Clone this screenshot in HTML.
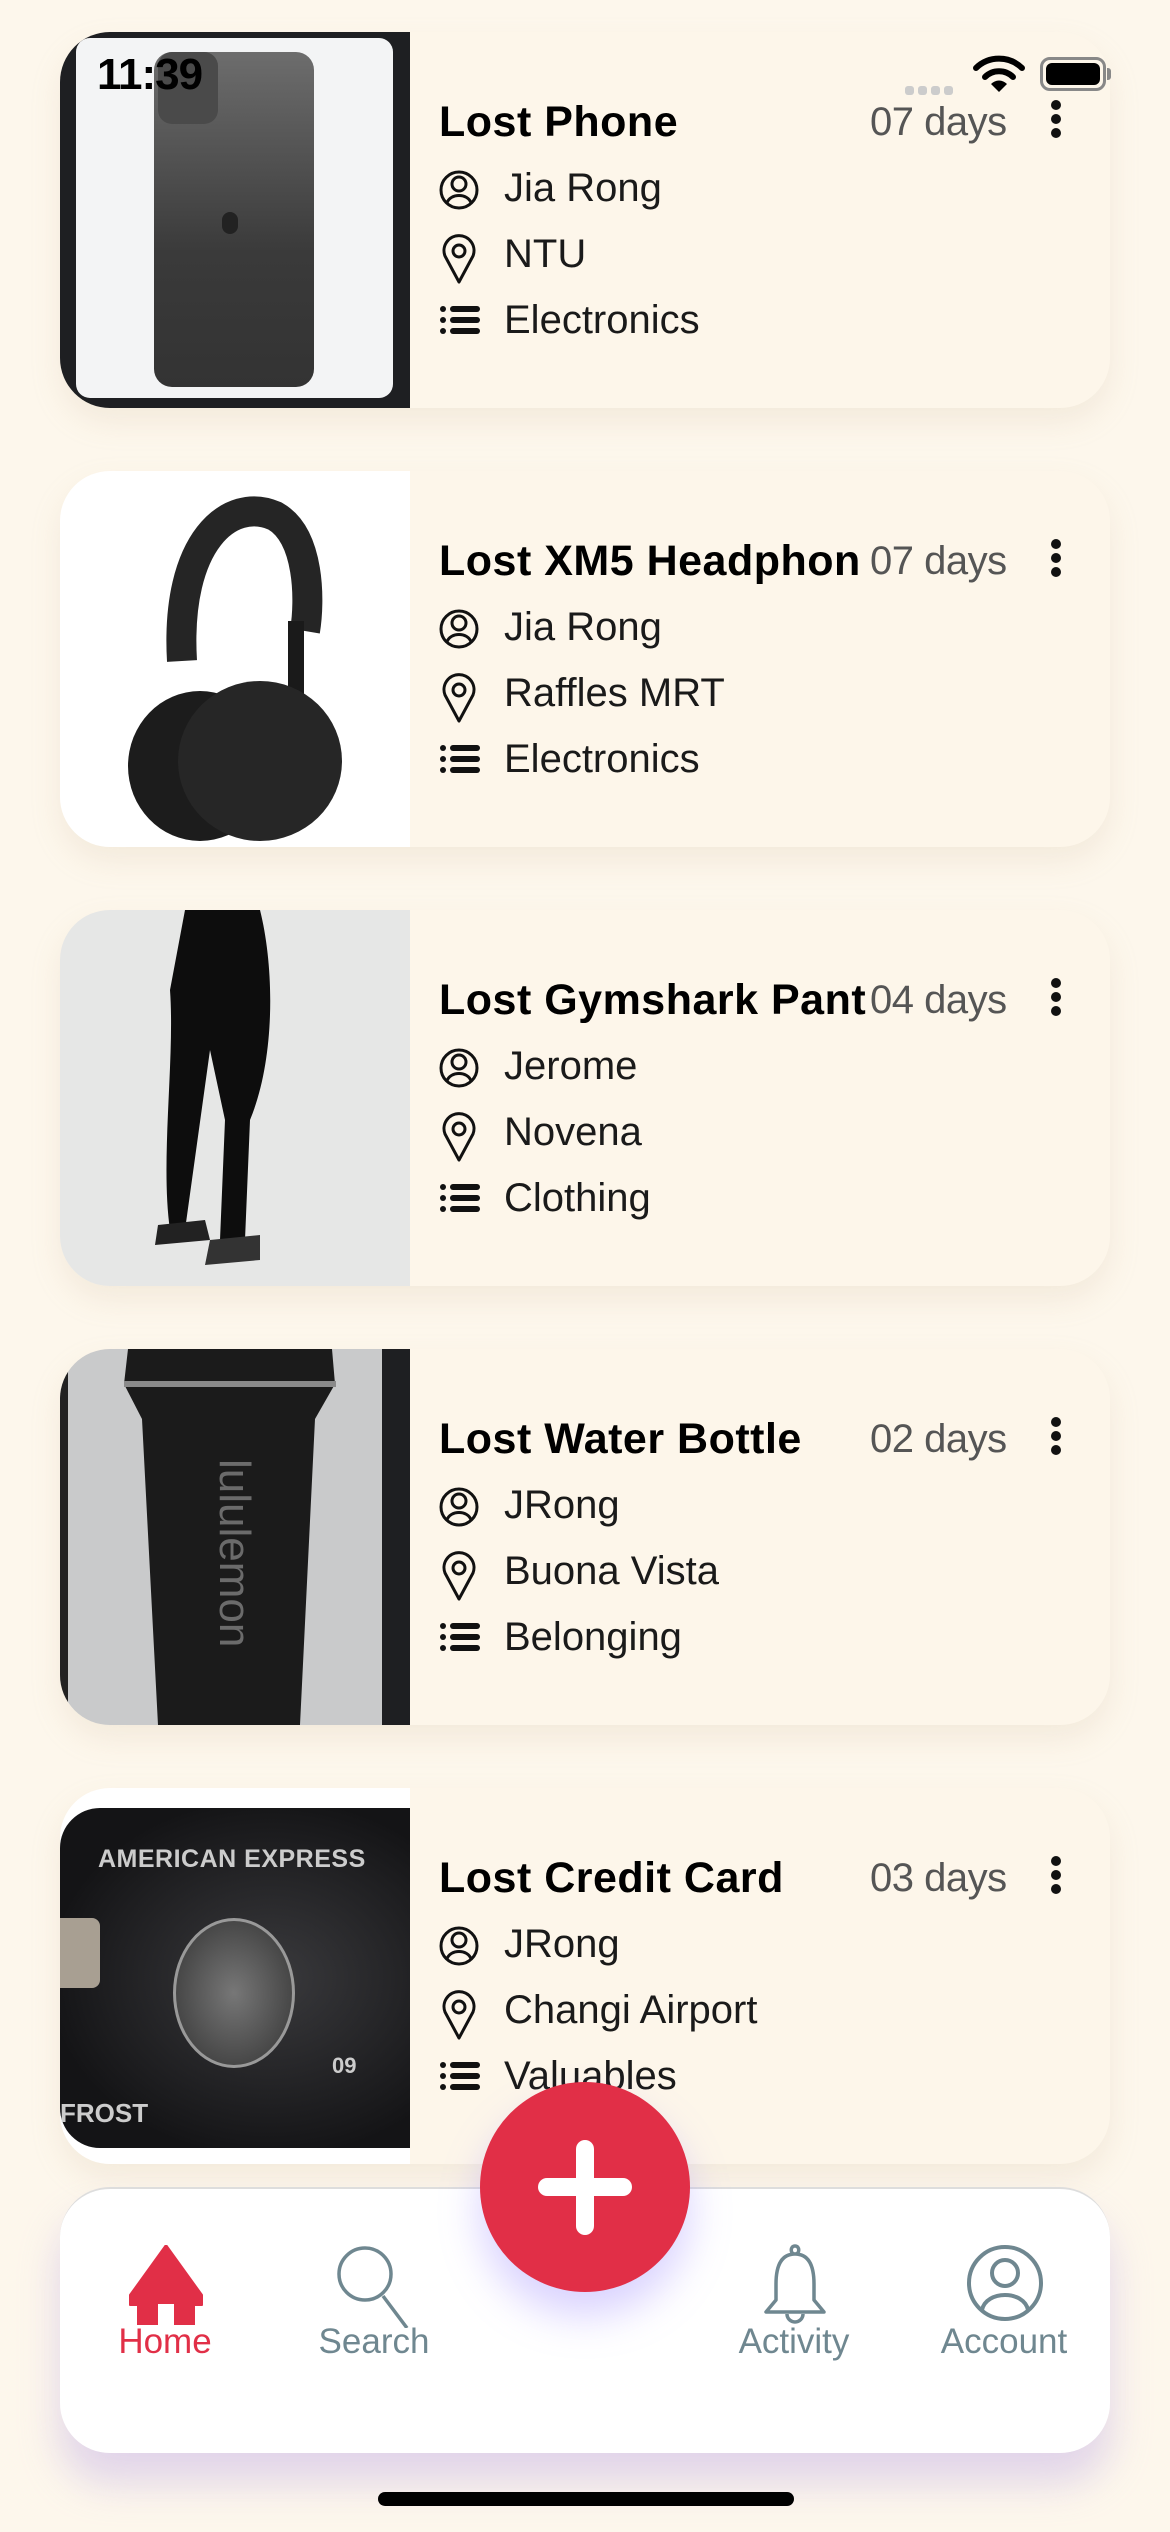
<!DOCTYPE html>
<html><head><meta charset="utf-8"><style>
*{margin:0;padding:0;box-sizing:border-box}
body{width:1170px;height:2532px;background:#fdf7ec;position:relative;overflow:hidden;font-family:"Liberation Sans",sans-serif}
.card{position:absolute;left:60px;width:1050px;height:376px;background:#fdf6ea;border-radius:50px;box-shadow:0 14px 30px rgba(200,180,150,0.18);overflow:hidden}
.img{position:absolute;left:0;top:0;width:350px;height:376px;overflow:hidden}
.title{position:absolute;left:379px;top:66px;font-size:43px;font-weight:bold;color:#000;white-space:nowrap;letter-spacing:0.5px}
.days{position:absolute;left:808px;top:68px;font-size:40px;color:#555;background:#fdf6ea;padding-left:2px;letter-spacing:-0.5px}
.dots{position:absolute;left:991px;top:68px;width:12px}
.dots i{display:block;width:10px;height:10px;border-radius:50%;background:#111;margin-bottom:4px}
.row{position:absolute;left:379px;font-size:40px;color:#1a1a1a;white-space:nowrap}
.row svg{position:absolute;left:0;top:2px}
.row span{position:absolute;left:65px;top:0}
.nav{position:absolute;left:60px;top:2187px;width:1050px;height:266px;background:#fff;border-radius:50px;box-shadow:0 30px 40px rgba(190,170,230,0.45);border-top:2px solid #ddd}
.lbl{position:absolute;top:2322px;font-size:35px;color:#6f8790;text-align:center;width:200px}
</style></head><body>

<div style="position:absolute;left:97px;top:50px;font-size:44px;font-weight:bold;color:#000;z-index:5;letter-spacing:-1px">11:39</div>
<div style="position:absolute;left:905px;top:82px;z-index:5">
<span style="display:inline-block;width:9px;height:9px;border-radius:3px;background:#ccc;margin-right:4px"></span><span style="display:inline-block;width:9px;height:9px;border-radius:3px;background:#ccc;margin-right:4px"></span><span style="display:inline-block;width:9px;height:9px;border-radius:3px;background:#ccc;margin-right:4px"></span><span style="display:inline-block;width:9px;height:9px;border-radius:3px;background:#ccc"></span></div>
<svg style="position:absolute;left:973px;top:54px;z-index:5" width="52" height="38" viewBox="0 0 52 38"><path d="M3 14 A33 33 0 0 1 49 14" stroke="#000" stroke-width="6" fill="none" stroke-linecap="round"/><path d="M12 23 A20 20 0 0 1 40 23" stroke="#000" stroke-width="6" fill="none" stroke-linecap="round"/><path d="M18 30 L26 38 L34 30 A11 11 0 0 0 18 30Z" fill="#000"/></svg>
<div style="position:absolute;left:1040px;top:57px;width:66px;height:34px;border:3px solid #888;border-radius:10px;z-index:5;padding:3px"><div style="width:100%;height:100%;background:#000;border-radius:6px"></div></div>
<div style="position:absolute;left:1107px;top:68px;width:4px;height:12px;background:#888;border-radius:0 3px 3px 0;z-index:5"></div>

<div class="card" style="top:32px">
 <div class="img" style="background:#1e1f22"><div style="position:absolute;left:16px;top:6px;width:317px;height:360px;background:#f3f4f5;border-radius:14px"></div>
 <div style="position:absolute;left:94px;top:20px;width:160px;height:335px;border-radius:18px;background:linear-gradient(180deg,#6d6d6d,#3a3a3a 60%,#333)"></div>
 <div style="position:absolute;left:98px;top:20px;width:60px;height:72px;border-radius:14px;background:#4a4a4a"></div>
 <div style="position:absolute;left:162px;top:180px;width:16px;height:22px;border-radius:8px;background:#222"></div></div>
 <div class="title">Lost Phone</div>
 <div class="days">07 days</div>
 <div class="dots"><i></i><i></i><i></i></div>
 <div class="row" style="top:134px"><svg width="44" height="44" viewBox="0 0 44 44"><circle cx="20" cy="22" r="18" fill="none" stroke="#111" stroke-width="3"/><circle cx="20" cy="16" r="7" fill="none" stroke="#111" stroke-width="3"/><path d="M8 35 C11 25 29 25 32 35" fill="none" stroke="#111" stroke-width="3"/></svg><span>Jia Rong</span></div>
 <div class="row" style="top:200px"><svg width="44" height="50" viewBox="0 0 44 50"><path d="M20 48 L6 22 A15 15 0 1 1 34 22 Z" fill="none" stroke="#111" stroke-width="3" stroke-linejoin="round"/><circle cx="20" cy="17" r="6" fill="none" stroke="#111" stroke-width="3"/></svg><span>NTU</span></div>
 <div class="row" style="top:266px"><svg width="44" height="44" viewBox="0 0 44 44"><g fill="#111"><circle cx="4" cy="9" r="3"/><circle cx="4" cy="20" r="3"/><circle cx="4" cy="31" r="3"/><rect x="11" y="6" width="30" height="6" rx="3"/><rect x="11" y="17" width="30" height="6" rx="3"/><rect x="11" y="28" width="30" height="6" rx="3"/></g></svg><span>Electronics</span></div>
</div>

<div class="card" style="top:471px">
 <div class="img" style="background:#fff"><svg width="350" height="376" viewBox="0 0 350 376"><path d="M122 190 C115 70 170 25 215 45 C250 65 250 130 245 160" stroke="#252525" stroke-width="30" fill="none"/><rect x="228" y="150" width="16" height="90" fill="#1a1a1a"/><ellipse cx="140" cy="295" rx="72" ry="75" fill="#1c1c1c"/><ellipse cx="200" cy="290" rx="82" ry="80" fill="#262626"/></svg></div>
 <div class="title">Lost XM5 Headphon</div>
 <div class="days">07 days</div>
 <div class="dots"><i></i><i></i><i></i></div>
 <div class="row" style="top:134px"><svg width="44" height="44" viewBox="0 0 44 44"><circle cx="20" cy="22" r="18" fill="none" stroke="#111" stroke-width="3"/><circle cx="20" cy="16" r="7" fill="none" stroke="#111" stroke-width="3"/><path d="M8 35 C11 25 29 25 32 35" fill="none" stroke="#111" stroke-width="3"/></svg><span>Jia Rong</span></div>
 <div class="row" style="top:200px"><svg width="44" height="50" viewBox="0 0 44 50"><path d="M20 48 L6 22 A15 15 0 1 1 34 22 Z" fill="none" stroke="#111" stroke-width="3" stroke-linejoin="round"/><circle cx="20" cy="17" r="6" fill="none" stroke="#111" stroke-width="3"/></svg><span>Raffles MRT</span></div>
 <div class="row" style="top:266px"><svg width="44" height="44" viewBox="0 0 44 44"><g fill="#111"><circle cx="4" cy="9" r="3"/><circle cx="4" cy="20" r="3"/><circle cx="4" cy="31" r="3"/><rect x="11" y="6" width="30" height="6" rx="3"/><rect x="11" y="17" width="30" height="6" rx="3"/><rect x="11" y="28" width="30" height="6" rx="3"/></g></svg><span>Electronics</span></div>
</div>

<div class="card" style="top:910px">
 <div class="img" style="background:#e6e7e6"><svg width="350" height="376" viewBox="0 0 350 376"><path d="M125 0 L200 0 C215 60 215 150 190 210 L185 330 L160 330 L165 210 L150 140 L125 320 L110 320 C100 250 115 150 110 80 Z" fill="#0d0d0d"/><path d="M98 315 L145 310 L150 330 L95 335 Z" fill="#222"/><path d="M150 330 L200 325 L200 350 L145 355 Z" fill="#333"/></svg></div>
 <div class="title">Lost Gymshark Pant</div>
 <div class="days">04 days</div>
 <div class="dots"><i></i><i></i><i></i></div>
 <div class="row" style="top:134px"><svg width="44" height="44" viewBox="0 0 44 44"><circle cx="20" cy="22" r="18" fill="none" stroke="#111" stroke-width="3"/><circle cx="20" cy="16" r="7" fill="none" stroke="#111" stroke-width="3"/><path d="M8 35 C11 25 29 25 32 35" fill="none" stroke="#111" stroke-width="3"/></svg><span>Jerome</span></div>
 <div class="row" style="top:200px"><svg width="44" height="50" viewBox="0 0 44 50"><path d="M20 48 L6 22 A15 15 0 1 1 34 22 Z" fill="none" stroke="#111" stroke-width="3" stroke-linejoin="round"/><circle cx="20" cy="17" r="6" fill="none" stroke="#111" stroke-width="3"/></svg><span>Novena</span></div>
 <div class="row" style="top:266px"><svg width="44" height="44" viewBox="0 0 44 44"><g fill="#111"><circle cx="4" cy="9" r="3"/><circle cx="4" cy="20" r="3"/><circle cx="4" cy="31" r="3"/><rect x="11" y="6" width="30" height="6" rx="3"/><rect x="11" y="17" width="30" height="6" rx="3"/><rect x="11" y="28" width="30" height="6" rx="3"/></g></svg><span>Clothing</span></div>
</div>

<div class="card" style="top:1349px">
 <div class="img" style="background:#c9cacb"><div style="position:absolute;left:0;top:0;width:8px;height:376px;background:#222"></div><div style="position:absolute;left:322px;top:0;width:28px;height:376px;background:#1e1f22"></div>
 <svg width="350" height="376" viewBox="0 0 350 376" style="position:absolute;left:0;top:0"><path d="M68 0 L272 0 L275 35 L255 70 L240 376 L98 376 L82 70 L64 35 Z" fill="#1b1b1b"/><rect x="64" y="32" width="212" height="6" fill="#8a8a8a"/>
 <text transform="translate(160,110) rotate(90)" font-family="Liberation Sans" font-size="44" fill="#6b6b6b">lululemon</text></svg></div>
 <div class="title">Lost Water Bottle</div>
 <div class="days">02 days</div>
 <div class="dots"><i></i><i></i><i></i></div>
 <div class="row" style="top:134px"><svg width="44" height="44" viewBox="0 0 44 44"><circle cx="20" cy="22" r="18" fill="none" stroke="#111" stroke-width="3"/><circle cx="20" cy="16" r="7" fill="none" stroke="#111" stroke-width="3"/><path d="M8 35 C11 25 29 25 32 35" fill="none" stroke="#111" stroke-width="3"/></svg><span>JRong</span></div>
 <div class="row" style="top:200px"><svg width="44" height="50" viewBox="0 0 44 50"><path d="M20 48 L6 22 A15 15 0 1 1 34 22 Z" fill="none" stroke="#111" stroke-width="3" stroke-linejoin="round"/><circle cx="20" cy="17" r="6" fill="none" stroke="#111" stroke-width="3"/></svg><span>Buona Vista</span></div>
 <div class="row" style="top:266px"><svg width="44" height="44" viewBox="0 0 44 44"><g fill="#111"><circle cx="4" cy="9" r="3"/><circle cx="4" cy="20" r="3"/><circle cx="4" cy="31" r="3"/><rect x="11" y="6" width="30" height="6" rx="3"/><rect x="11" y="17" width="30" height="6" rx="3"/><rect x="11" y="28" width="30" height="6" rx="3"/></g></svg><span>Belonging</span></div>
</div>

<div class="card" style="top:1788px">
 <div class="img" style="background:#fff"><div style="position:absolute;left:0;top:20px;width:350px;height:340px;background:radial-gradient(ellipse at 60% 50%,#3a3a3d,#141416 75%);border-radius:40px 0 0 40px"></div>
 <div style="position:absolute;left:38px;top:57px;font-size:25px;font-weight:bold;color:#ccc;letter-spacing:0.5px">AMERICAN EXPRESS</div>
 <div style="position:absolute;left:0;top:130px;width:40px;height:70px;background:#a89f92;border-radius:0 8px 8px 0"></div>
 <div style="position:absolute;left:113px;top:130px;width:122px;height:150px;border:3px solid #999;border-radius:50%;background:radial-gradient(#777,#333)"></div>
 <div style="position:absolute;left:272px;top:265px;font-size:22px;color:#ccc;font-weight:bold">09</div>
 <div style="position:absolute;left:0;top:310px;font-size:26px;color:#ccc;font-weight:bold">FROST</div></div>
 <div class="title">Lost Credit Card</div>
 <div class="days">03 days</div>
 <div class="dots"><i></i><i></i><i></i></div>
 <div class="row" style="top:134px"><svg width="44" height="44" viewBox="0 0 44 44"><circle cx="20" cy="22" r="18" fill="none" stroke="#111" stroke-width="3"/><circle cx="20" cy="16" r="7" fill="none" stroke="#111" stroke-width="3"/><path d="M8 35 C11 25 29 25 32 35" fill="none" stroke="#111" stroke-width="3"/></svg><span>JRong</span></div>
 <div class="row" style="top:200px"><svg width="44" height="50" viewBox="0 0 44 50"><path d="M20 48 L6 22 A15 15 0 1 1 34 22 Z" fill="none" stroke="#111" stroke-width="3" stroke-linejoin="round"/><circle cx="20" cy="17" r="6" fill="none" stroke="#111" stroke-width="3"/></svg><span>Changi Airport</span></div>
 <div class="row" style="top:266px"><svg width="44" height="44" viewBox="0 0 44 44"><g fill="#111"><circle cx="4" cy="9" r="3"/><circle cx="4" cy="20" r="3"/><circle cx="4" cy="31" r="3"/><rect x="11" y="6" width="30" height="6" rx="3"/><rect x="11" y="17" width="30" height="6" rx="3"/><rect x="11" y="28" width="30" height="6" rx="3"/></g></svg><span>Valuables</span></div>
</div>

<div class="nav"></div>
<svg style="position:absolute;left:128px;top:2245px" width="76" height="80" viewBox="0 0 76 80"><path d="M38 0 L74 50 L74 60 L66 60 L66 80 L47 80 L47 58 L29 58 L29 80 L10 80 L10 60 L2 60 L2 50 Z" fill="#e12f47" stroke="#e12f47" stroke-width="2" stroke-linejoin="round"/></svg>
<div class="lbl" style="left:65px;color:#e12f47">Home</div>
<svg style="position:absolute;left:335px;top:2244px" width="80" height="84" viewBox="0 0 80 84"><circle cx="30" cy="30" r="26" fill="none" stroke="#6f8790" stroke-width="3.5"/><path d="M48 52 L72 84" stroke="#6f8790" stroke-width="3.5"/></svg>
<div class="lbl" style="left:274px">Search</div>
<svg style="position:absolute;left:762px;top:2244px" width="66" height="84" viewBox="0 0 66 84"><path d="M33 2 C28 2 28 10 33 10 C38 10 38 2 33 2Z M33 10 C18 10 14 24 14 40 L14 56 L4 68 L62 68 L52 56 L52 40 C52 24 48 10 33 10Z" fill="none" stroke="#6f8790" stroke-width="3.5" stroke-linejoin="round"/><path d="M25 70 A8 8 0 0 0 41 70" fill="none" stroke="#6f8790" stroke-width="3.5"/></svg>
<div class="lbl" style="left:694px">Activity</div>
<svg style="position:absolute;left:966px;top:2244px" width="78" height="78" viewBox="0 0 78 78"><circle cx="39" cy="39" r="36" fill="none" stroke="#6f8790" stroke-width="4"/><circle cx="39" cy="29" r="13" fill="none" stroke="#6f8790" stroke-width="4"/><path d="M16 66 C20 46 58 46 62 66" fill="none" stroke="#6f8790" stroke-width="4"/></svg>
<div class="lbl" style="left:904px">Account</div>

<div style="position:absolute;left:480px;top:2082px;width:210px;height:210px;border-radius:50%;background:#e12f47;box-shadow:0 24px 40px rgba(150,130,255,0.35)"></div>
<div style="position:absolute;left:576px;top:2140px;width:18px;height:95px;border-radius:9px;background:#fff"></div>
<div style="position:absolute;left:538px;top:2178px;width:94px;height:18px;border-radius:9px;background:#fff"></div>

<div style="position:absolute;left:378px;top:2492px;width:416px;height:14px;border-radius:7px;background:#000"></div>
</body></html>
